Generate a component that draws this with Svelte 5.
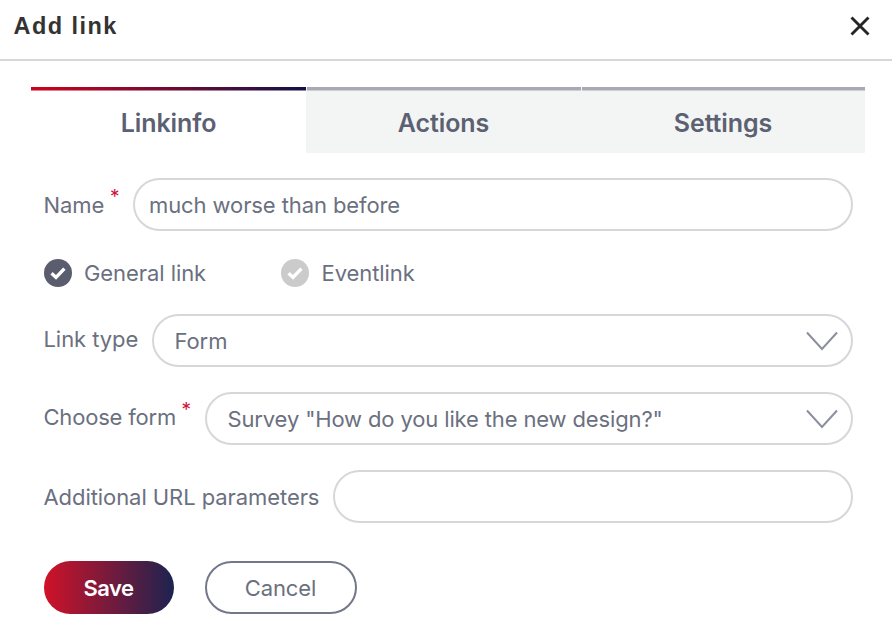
<script>
  let tab = $state('Linkinfo');
  let kind = $state('General link');
  let name = $state('much worse than before');
  let params = $state('');
  const tabs = ['Linkinfo', 'Actions', 'Settings'];
</script>

{#snippet check()}
  <svg class="check" viewBox="0 0 28 28"><circle cx="14" cy="14" r="14" /><path d="M7.6 14.2l4.4 4.2 8.4-8.8" /></svg>
{/snippet}

{#snippet chevron()}
  <svg class="chevron" viewBox="0 0 34 20"><path d="M2 1.5L17 18 32 1.5" /></svg>
{/snippet}

<div class="dialog">
  <header>
    <h1>Add link</h1>
    <button class="close" aria-label="Close">
      <svg viewBox="0 0 20 20"><path d="M1.5 1.5l17 17M18.5 1.5l-17 17" /></svg>
    </button>
  </header>

  <nav>
    {#each tabs as t}
      <button class="tab" class:active={tab === t} onclick={() => (tab = t)}>{t}</button>
    {/each}
  </nav>

  <form onsubmit={(e) => e.preventDefault()}>
    <div class="row">
      <label class="name" for="name">Name <sup>*</sup></label>
      <input id="name" class="field" bind:value={name} />
    </div>
    <div class="options">
      {#each ['General link', 'Eventlink'] as k}
        <button type="button" class="option" class:on={kind === k} onclick={() => (kind = k)}>
          {@render check()}<span>{k}</span>
        </button>
      {/each}
    </div>
    <div class="row">
      <span class="label type">Link type</span>
      <div class="field select"><span>Form</span>{@render chevron()}</div>
    </div>
    <div class="row">
      <span class="label choose">Choose form <sup>*</sup></span>
      <div class="field select"><span class="survey">Survey "How do you like the new design?"</span>{@render chevron()}</div>
    </div>
    <div class="row">
      <label class="params" for="params">Additional URL parameters</label>
      <input id="params" class="field" bind:value={params} />
    </div>
    <div class="buttons">
      <button class="save">Save</button>
      <button type="button" class="cancel">Cancel</button>
    </div>
  </form>
</div>

<style>
  :global(body) { background: #fff; }
  .dialog, .dialog * { box-sizing: border-box; }
  .dialog {
    width: 892px;
    height: 636px;
    overflow: hidden;
    background: #fff;
    font: 22px/28px Inter, sans-serif;
    letter-spacing: -0.07px;
    color: #6b7080;
  }
  button { font: inherit; letter-spacing: inherit; color: inherit; border: 0; padding: 0; background: none; }
  header {
    display: flex;
    align-items: center;
    justify-content: space-between;
    height: 61px;
    padding: 0 22.5px 8px 13.5px;
    border-bottom: 2px solid #d6d7d9;
  }
  h1 {
    margin: 0;
    padding-top: 1px;
    font: bold 23.5px/28px "Liberation Sans", Arial, sans-serif;
    letter-spacing: 1.45px;
    color: #333;
  }
  .close { display: flex; }
  .close svg { width: 20px; height: 20px; fill: none; stroke: #262626; stroke-width: 2.9; }
  nav { display: flex; margin: 26px 27px 0 31px; height: 66px; }
  .tab {
    flex: 1;
    padding-top: 5px;
    font-size: 25px;
    font-weight: 600;
    letter-spacing: -0.1px;
    color: #5c6172;
    background: linear-gradient(#a8a9b4, #a8a9b4) 1px 0 / 100% 3.5px no-repeat #f3f5f5;
  }
  .tab:nth-child(-n + 2) { flex: 0 0 275px; }
  .tab.active {
    background: linear-gradient(90deg, #d0021b, #12124a) 0 0 / 100% 3.5px no-repeat #fff;
  }
  form { padding: 25px 39px 0 43.5px; }
  .row { display: flex; align-items: center; height: 53px; margin-bottom: 25px; }
  label, .label { flex: none; white-space: nowrap; }
  .name { width: 89px; }
  .type { width: 108px; padding-bottom: 3px; }
  .choose { width: 161px; padding-bottom: 3px; letter-spacing: -0.2px; }
  .params { width: 289px; }
  sup {
    margin-left: -0.5px;
    font-size: 19px;
    line-height: 0;
    color: #d0103a;
    vertical-align: 9.5px;
  }
  .field {
    flex: 1;
    min-width: 0;
    height: 53px;
    padding: 0 15px 0 14.5px;
    border: 2px solid #d7d7d9;
    border-radius: 27px;
    background: #fff;
    font: inherit;
    letter-spacing: -0.1px;
    color: inherit;
    outline: none;
  }
  .select { display: flex; align-items: center; justify-content: space-between; padding: 0 12px 0 21px; }
  .survey { letter-spacing: -0.14px; }
  .chevron { width: 34px; height: 20px; fill: none; stroke: #8c8f9d; stroke-width: 2; }
  .options { display: flex; height: 28px; padding: 0; margin: 28px 0 27px; }
  .option { display: flex; align-items: center; width: 237.5px; }
  .row:has(+ .options) { margin-bottom: 0; }
  .check { width: 28px; height: 28px; margin-right: 12.5px; fill: #cbcbcb; }
  .check path { fill: none; stroke: #fff; stroke-width: 3.4; }
  .on .check { fill: #595d6d; }
  .buttons { display: flex; gap: 31px; padding-top: 13px; }
  .save, .cancel { height: 53px; border-radius: 27px; }
  .save {
    width: 130px;
    color: #fff;
    font-weight: 600;
    letter-spacing: -0.5px;
    background: linear-gradient(90deg, #d01228, #1c2350);
  }
  .cancel { width: 152px; border: 2px solid #73778a; }
</style>
